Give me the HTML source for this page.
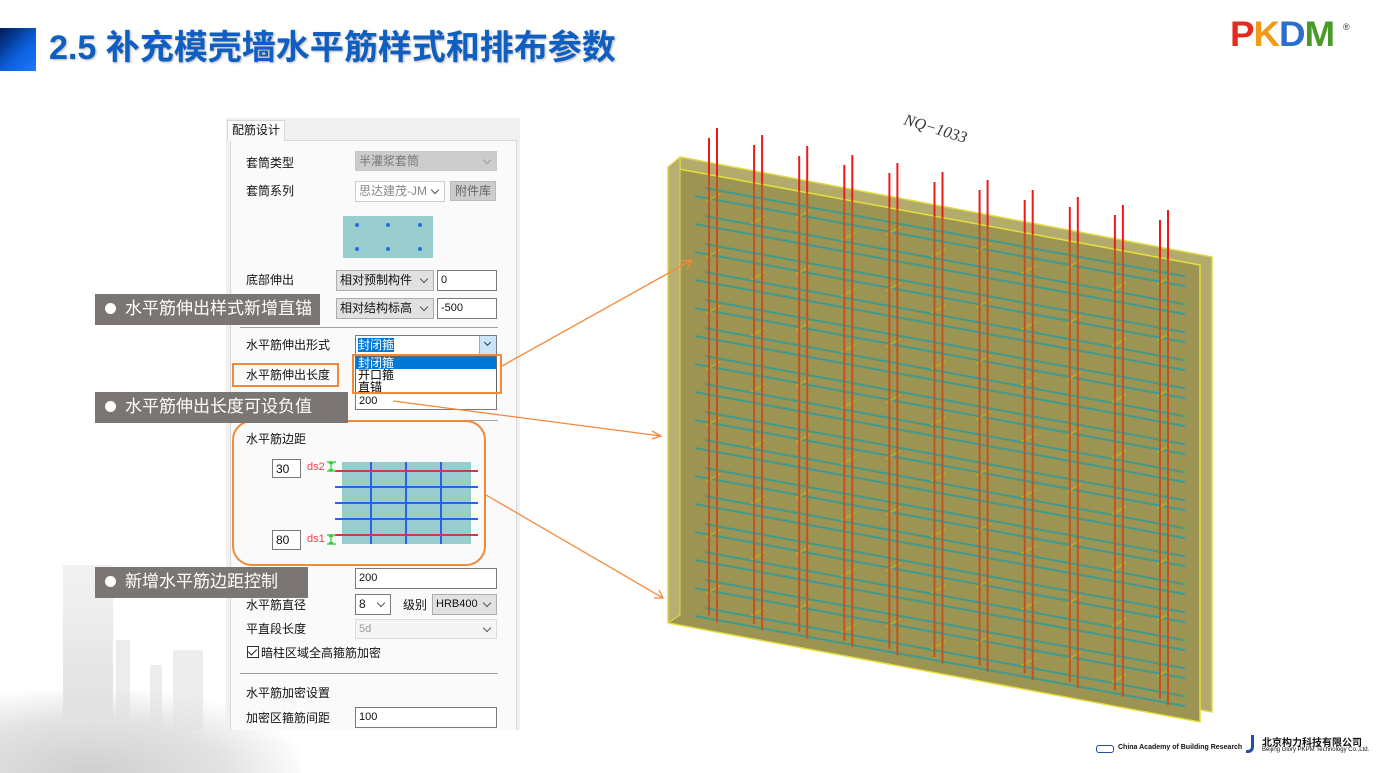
<!DOCTYPE html>
<html><head><meta charset="utf-8"><style>
*{margin:0;padding:0;box-sizing:border-box}
body{width:1379px;height:773px;background:#fff;position:relative;overflow:hidden;font-family:"Liberation Sans","Noto Sans CJK SC",sans-serif;}
.a{position:absolute}
.t{font-size:12px;color:#111;white-space:nowrap;line-height:14px}
.inp{position:absolute;background:#fff;border:1px solid #7a7a7a;font-size:11px;padding:2px 3px;line-height:14px;color:#111}
.sel{position:absolute;background:#e1e1e1;border:1px solid #adadad;font-size:12px;padding:2px 3px;line-height:14px;color:#111}
.sel:after{content:"";position:absolute;right:6px;top:5px;width:5px;height:5px;border-right:1px solid #555;border-bottom:1px solid #555;transform:rotate(45deg)}
.dis{background:#ccc;border-color:#c8c8c8;color:#777}
.dis:after{border-color:#999}
.call{position:absolute;background:#7b7674;color:#fff;font-size:17px;line-height:30px;padding-left:10px;white-space:nowrap;height:31px}
.call b{display:inline-block;width:11px;height:11px;border-radius:50%;background:#fff;margin-right:9px;vertical-align:0}
.sep{position:absolute;left:240px;width:258px;height:1px;background:#a0a0a0}
</style></head><body>
<!-- background city -->
<div class="a" style="left:63px;top:565px;width:50px;height:160px;background:linear-gradient(180deg,#f2f2f2,#e0e0e0)"></div>
<div class="a" style="left:116px;top:640px;width:14px;height:90px;background:#ececec"></div>
<div class="a" style="left:150px;top:665px;width:12px;height:60px;background:#ececec"></div>
<div class="a" style="left:173px;top:650px;width:30px;height:80px;background:#ededed"></div>
<div class="a" style="left:0;top:690px;width:300px;height:83px;background:radial-gradient(ellipse at 30% 100%,#cfcfcf 0%,#e2e2e2 45%,rgba(255,255,255,0) 75%)"></div>

<!-- title -->
<div class="a" style="left:0;top:28px;width:36px;height:43px;background:linear-gradient(135deg,#001a55,#0a5fd8 55%,#1a7aff)"></div>
<div class="a" style="left:49px;top:26px;font-size:34px;font-weight:bold;color:#0f5ec2;line-height:44px;text-shadow:1px 1px 2px rgba(0,0,0,.3);white-space:nowrap">2.5 补充模壳墙水平筋样式和排布参数</div>
<!-- logo -->
<div class="a" style="left:1230px;top:17px;font-size:35px;font-weight:900;line-height:36px;letter-spacing:-1px;white-space:nowrap;font-family:'Liberation Sans',sans-serif;transform:scaleX(1.05);transform-origin:left"><span style="color:#e52b1e">P</span><span style="color:#f29a16">K</span><span style="color:#2b6fc8">D</span><span style="color:#4a9a2a">M</span></div>
<div class="a" style="left:1343px;top:22px;font-size:9px;color:#333">®</div>

<!-- dialog -->
<div class="a" style="left:226px;top:118px;width:294px;height:612px;background:#f0f0f0"></div>
<div class="a" style="left:230px;top:140px;width:287px;height:590px;background:#fafafa;border:1px solid #d8d8d8;border-bottom:none"></div>
<div class="a" style="left:227px;top:120px;width:58px;height:21px;background:#fafafa;border:1px solid #d8d8d8;border-bottom:none"></div>
<div class="a t" style="left:232px;top:123px">配筋设计</div>

<div class="a t" style="left:246px;top:156px">套筒类型</div>
<div class="sel dis" style="left:355px;top:151px;width:142px;height:20px">半灌浆套筒</div>
<div class="a t" style="left:246px;top:184px">套筒系列</div>
<div class="sel" style="left:355px;top:181px;width:90px;height:21px;background:#fff;border-color:#ccc;color:#888">思达建茂-JM</div>
<div class="a" style="left:450px;top:181px;width:46px;height:20px;background:#ccc;border:1px solid #bbb;font-size:12px;color:#666;text-align:center;line-height:18px">附件库</div>
<svg class="a" style="left:343px;top:216px" width="90" height="42"><rect width="90" height="42" fill="#99cccc"/><g fill="#2a6fe0"><circle cx="14" cy="9" r="2"/><circle cx="45" cy="9" r="2"/><circle cx="77" cy="9" r="2"/><circle cx="14" cy="33" r="2"/><circle cx="45" cy="33" r="2"/><circle cx="77" cy="33" r="2"/></g></svg>

<div class="a t" style="left:246px;top:273px">底部伸出</div>
<div class="sel" style="left:336px;top:270px;width:98px;height:21px">相对预制构件</div>
<div class="inp" style="left:437px;top:270px;width:60px;height:21px">0</div>
<div class="sel" style="left:336px;top:298px;width:98px;height:21px">相对结构标高</div>
<div class="inp" style="left:437px;top:298px;width:60px;height:21px">-500</div>
<div class="sep" style="top:327px"></div>

<div class="a t" style="left:246px;top:338px">水平筋伸出形式</div>
<div class="inp" style="left:355px;top:335px;width:142px;height:21px;padding:2px 2px"><span style="background:#0078d7;color:#fff;font-size:12px">封闭箍</span></div>
<div class="a" style="left:479px;top:336px;width:17px;height:19px;background:#cce4f7;border-left:1px solid #7eb4ea"></div>
<div class="a" style="left:485px;top:340px;width:5px;height:5px;border-right:1px solid #333;border-bottom:1px solid #333;transform:rotate(45deg)"></div>
<div class="inp" style="left:355px;top:389px;width:142px;height:21px;padding-top:4px">200</div>
<div class="a" style="left:355px;top:356px;width:142px;height:37px;background:#fff;border:1px solid #666;font-size:12px;line-height:12px">
<div style="background:#0078d7;color:#fff;padding-left:2px">封闭箍</div><div style="padding-left:2px">开口箍</div><div style="padding-left:2px">直锚</div></div>
<div class="a" style="left:352px;top:354px;width:150px;height:40px;border:2px solid #f08a3a"></div>
<div class="a" style="left:232px;top:363px;width:107px;height:24px;border:2px solid #f08a3a"></div>
<div class="a t" style="left:246px;top:368px">水平筋伸出长度</div>
<div class="sep" style="top:420px"></div>

<div class="a" style="left:232px;top:420px;width:254px;height:146px;border:2px solid #f08a3a;border-radius:20px"></div>
<div class="a t" style="left:246px;top:432px">水平筋边距</div>
<div class="inp" style="left:272px;top:459px;width:29px;height:19px;font-size:12px">30</div>
<div class="inp" style="left:272px;top:530px;width:29px;height:20px;font-size:12px">80</div>
<div class="a" style="left:307px;top:461px;font-size:11px;color:#f04040">ds2</div>
<div class="a" style="left:307px;top:533px;font-size:11px;color:#f04040">ds1</div>
<svg class="a" style="left:325px;top:455px" width="160" height="95">
<rect x="17" y="7" width="129" height="82" fill="#99cccc"/>
<g stroke="#2266ee" stroke-width="2"><line x1="46" y1="7" x2="46" y2="89"/><line x1="81" y1="7" x2="81" y2="89"/><line x1="116" y1="7" x2="116" y2="89"/>
<line x1="10" y1="32" x2="153" y2="32"/><line x1="10" y1="48" x2="153" y2="48"/><line x1="10" y1="64" x2="153" y2="64"/></g>
<g stroke="#c04050" stroke-width="2"><line x1="10" y1="16" x2="153" y2="16"/><line x1="10" y1="80" x2="153" y2="80"/></g>
<g stroke="#22cc22" stroke-width="1.2" fill="none"><path d="M2 7h9M2 16h9M6 7v9M4 9l2-2 2 2M4 14l2 2 2-2"/><path d="M2 80h9M2 89h9M6 80v9M4 82l2-2 2 2M4 87l2 2 2-2"/></g>
</svg>

<div class="inp" style="left:355px;top:568px;width:142px;height:21px">200</div>
<div class="a t" style="left:246px;top:598px">水平筋直径</div>
<div class="sel" style="left:355px;top:594px;width:36px;height:21px;background:#fff;border-color:#7a7a7a">8</div>
<div class="a t" style="left:403px;top:598px">级别</div>
<div class="sel" style="left:432px;top:594px;width:65px;height:21px;font-size:11px">HRB400</div>
<div class="a t" style="left:246px;top:622px">平直段长度</div>
<div class="sel" style="left:355px;top:619px;width:142px;height:20px;background:#f5f5f5;border-color:#ddd;color:#999;font-size:11px">5d</div>
<div class="a" style="left:247px;top:646px;width:12px;height:12px;border:1px solid #333;background:#fff"></div>
<div class="a" style="left:250px;top:647px;width:5px;height:8px;border-right:1.5px solid #222;border-bottom:1.5px solid #222;transform:rotate(45deg)"></div>
<div class="a t" style="left:261px;top:646px">暗柱区域全高箍筋加密</div>
<div class="sep" style="top:673px"></div>
<div class="a t" style="left:246px;top:686px">水平筋加密设置</div>
<div class="a t" style="left:246px;top:711px">加密区箍筋间距</div>
<div class="inp" style="left:355px;top:707px;width:142px;height:21px">100</div>

<!-- callouts -->
<div class="call" style="left:95px;top:294px;width:225px"><b></b>水平筋伸出样式新增直锚</div>
<div class="call" style="left:95px;top:392px;width:253px"><b></b>水平筋伸出长度可设负值</div>
<div class="call" style="left:95px;top:567px;width:213px"><b></b>新增水平筋边距控制</div>

<!-- wall -->
<svg class="a" style="left:0;top:0" width="1379" height="773" id="w">
<polygon points="680,157 1212,257 1212,712 680,615" fill="#b3ab6c" stroke="#e0d840" stroke-width="1.5"/>
<polygon points="668,167 1200,265 1200,722 668,623" fill="#9c9452" stroke="#e6de3a" stroke-width="1.5"/>
<polygon points="668,167 680,157 680,615 668,623" fill="#b8b070" stroke="#e6de3a"/>
<g id="g"></g>
<text x="903" y="124" font-family="Liberation Serif,serif" font-style="italic" font-size="16" fill="#333" transform="rotate(17 903 124)">NQ−1033</text>
<g stroke="#f5873a" stroke-width="1.3" fill="none">
<path d="M502 366L692 260M682 261l10-1-5 9"/>
<path d="M393 401L661 436M652 431l9 5-9 3"/>
<path d="M486 495L663 598M654 598l9 0-4-8"/>
</g>
</svg>
<script>
var g=document.getElementById('g'),s='',m=0.184;
function yt(x){return 167+m*(x-668)}
for(var k=0;k<16;k++){var u=188+28*k,l=196+28*k;
s+='<line x1="705" y1="'+u+'" x2="1185" y2="'+(u+m*480)+'" stroke="#3f9a8f" stroke-width="2"/>';
s+='<line x1="695" y1="'+l+'" x2="1185" y2="'+(l+m*490)+'" stroke="#3f9a8f" stroke-width="2"/>';}
var tops=[128,135,146,155,163,172,180,190,197,205,210];
for(var i=0;i<11;i++){var x=709+45.1*i;
for(var k=0;k<16;k+=2){var yy=196+28*k+m*(x-695)+14*((i)%2);
s+='<line x1="'+(x-3)+'" y1="'+(yy+3)+'" x2="'+(x+11)+'" y2="'+(yy-5)+'" stroke="#b8a830" stroke-width="2"/>';}
[[x,tops[i]+10],[x+8,tops[i]]].forEach(function(p){var X=p[0],ty=yt(X);
s+='<line x1="'+X+'" y1="'+p[1]+'" x2="'+X+'" y2="'+ty+'" stroke="#ee1a1a" stroke-width="2"/>';
s+='<line x1="'+X+'" y1="'+ty+'" x2="'+X+'" y2="'+(613+m*(X-668)-(X==x?5:0))+'" stroke="#c4521e" stroke-width="2"/>';});}
g.innerHTML=s;
</script>

<!-- bottom logos -->
<div class="a" style="left:1096px;top:745px;width:18px;height:8px;border:1.5px solid #1f4fa0;border-radius:3px"></div>
<div class="a" style="left:1118px;top:744px;font-size:7px;color:#111;font-weight:bold;white-space:nowrap">China Academy of Building Research</div>
<div class="a" style="left:1246px;top:735px;width:8px;height:18px;border-right:3px solid #1f4fa0;border-bottom:3px solid #1f4fa0;border-radius:0 0 6px 0"></div>
<div class="a" style="left:1262px;top:734px;font-size:10px;color:#111;white-space:nowrap;font-weight:bold">北京构力科技有限公司</div>
<div class="a" style="left:1262px;top:747px;font-size:6px;color:#111;white-space:nowrap">Beijing Glory PKPM Technology Co.,Ltd.</div>
</body></html>
